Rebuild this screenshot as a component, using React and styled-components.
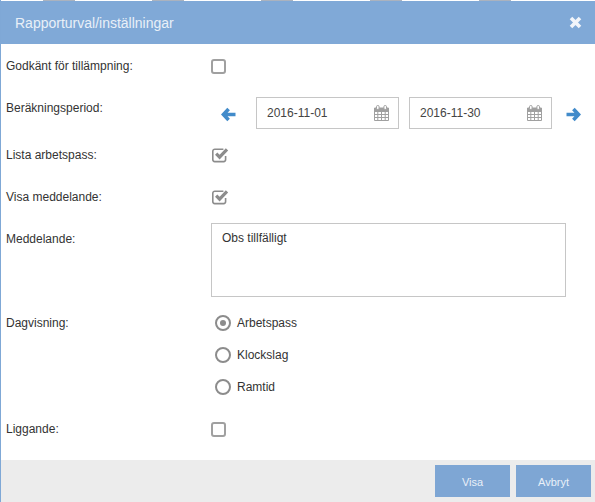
import styled, { createGlobalStyle } from "styled-components";

const GlobalStyle = createGlobalStyle`
  html, body {
    margin: 0;
    padding: 0;
    background: #fff;
  }
`;

const CalendarIcon = () => (
  <svg width="15" height="16" viewBox="0 0 15 16" fill="none">
    <path
      d="M0.5 3h14v12.5h-14zM0.5 6.5h14M0.5 9.5h14M0.5 12.5h14M3.8 6.5v9M7.5 6.5v9M11.2 6.5v9"
      stroke="#a0a0a0"
      strokeWidth="1"
    />
    <path d="M0.5 3h14v3.5h-14z" fill="#a0a0a0" />
    <rect x="2.5" y="0.5" width="2.6" height="4" rx="1.2" fill="#fff" stroke="#a0a0a0" />
    <rect x="9.9" y="0.5" width="2.6" height="4" rx="1.2" fill="#fff" stroke="#a0a0a0" />
  </svg>
);

const CheckedIcon = () => (
  <svg width="18" height="16" viewBox="-1 0 18 16" fill="none">
    <path
      d="M13.6 9v3.6a2 2 0 0 1-2 2H2.8a2 2 0 0 1-2-2V4.2a2 2 0 0 1 2-2h8.6"
      stroke="#8c8c8c"
      strokeWidth="1.6"
    />
    <path d="M4.2 6.6l3.4 3.6L15 2.4" stroke="#8c8c8c" strokeWidth="3.2" />
  </svg>
);

const ArrowIcon = ({ flip }) => (
  <svg
    width="15"
    height="15"
    viewBox="0 0 15 15"
    fill="none"
    style={flip ? { transform: "scaleX(-1)" } : undefined}
  >
    <path d="M7.6 2L2.4 7.5l5.2 5.5M3 7.5h11.5" stroke="#428bca" strokeWidth="3.6" />
  </svg>
);

const CloseIcon = () => (
  <svg width="13" height="13" viewBox="0 0 13 13" fill="none">
    <path d="M2 2l9 9M11 2l-9 9" stroke="#f2f5fa" strokeWidth="3.6" />
  </svg>
);

const App = () => {
  return (
    <>
      <GlobalStyle />
      <Dialog>
        <BackdropStrip>
          <BackdropMark />
          <BackdropMark />
          <BackdropMark />
          <BackdropMark />
          <BackdropMark />
        </BackdropStrip>
        <Header>
          <Title>Rapporturval/inställningar</Title>
          <CloseIcon />
        </Header>
        <Form>
          <Row $height={42}>
            <Label>Godkänt för tillämpning:</Label>
            <Control $offset={3}>
              <Checkbox />
            </Control>
          </Row>
          <Row $height={47}>
            <Label>Beräkningsperiod:</Label>
            <Period>
              <ArrowButton $side="left">
                <ArrowIcon />
              </ArrowButton>
              <DateField>
                2016-11-01
                <CalendarIcon />
              </DateField>
              <DateField>
                2016-11-30
                <CalendarIcon />
              </DateField>
              <ArrowButton $side="right">
                <ArrowIcon flip />
              </ArrowButton>
            </Period>
          </Row>
          <Row $height={42}>
            <Label>Lista arbetspass:</Label>
            <Control $offset={2}>
              <CheckedIcon />
            </Control>
          </Row>
          <Row $height={42}>
            <Label>Visa meddelande:</Label>
            <Control $offset={2}>
              <CheckedIcon />
            </Control>
          </Row>
          <Row $height={84}>
            <Label>Meddelande:</Label>
            <Control $offset={-6}>
              <MessageBox>Obs tillfälligt</MessageBox>
            </Control>
          </Row>
          <Row $height={106}>
            <Label>Dagvisning:</Label>
            <RadioGroup>
              <RadioRow>
                <Radio $checked />
                Arbetspass
              </RadioRow>
              <RadioRow>
                <Radio />
                Klockslag
              </RadioRow>
              <RadioRow>
                <Radio />
                Ramtid
              </RadioRow>
            </RadioGroup>
          </Row>
          <Row $height={41}>
            <Label>Liggande:</Label>
            <Control $offset={3}>
              <Checkbox />
            </Control>
          </Row>
        </Form>
        <Footer>
          <FooterButton>Visa</FooterButton>
          <FooterButton>Avbryt</FooterButton>
        </Footer>
      </Dialog>
    </>
  );
};

export default App;

const Dialog = styled.div`
  display: flex;
  flex-direction: column;
  width: 595px;
  height: 502px;
  box-sizing: border-box;
  border-left: 1px solid #7fa8d6;
  overflow: hidden;
  font-family: "Liberation Sans", Arial, sans-serif;
  font-size: 12px;
  color: #333;
`;

const BackdropStrip = styled.div`
  display: flex;
  gap: 77px;
  flex: 0 0 1px;
  padding-left: 42px;
`;

const BackdropMark = styled.span`
  width: 32px;
  height: 1px;
  background: #aab2be;
`;

const Header = styled.header`
  display: flex;
  align-items: center;
  justify-content: space-between;
  flex: 0 0 43px;
  margin-left: -1px;
  padding: 0 13px 0 15px;
  background: #80a9d7;
  color: #e9f0f8;
`;

const Title = styled.h4`
  margin: 0;
  font-size: 14px;
  font-weight: 400;
`;

const Form = styled.div`
  flex: 1;
  padding-top: 12px;
`;

const Row = styled.div`
  display: flex;
  align-items: flex-start;
  height: ${(p) => p.$height}px;
  padding-left: 5px;
`;

const Label = styled.label`
  flex: 0 0 205px;
  line-height: 20px;
`;

const Control = styled.div`
  display: flex;
  margin-top: ${(p) => p.$offset}px;
`;

const Checkbox = styled.span`
  width: 11px;
  height: 11px;
  border: 2px solid #a0a0a0;
  border-radius: 3px;
`;

const Period = styled.div`
  display: flex;
  align-items: center;
  margin-top: -1px;
`;

const ArrowButton = styled.span`
  display: flex;
  margin-top: 2px;
  margin-left: ${(p) => (p.$side === "left" ? "10px" : "14px")};
  margin-right: ${(p) => (p.$side === "left" ? "20px" : "0")};
`;

const DateField = styled.div`
  display: flex;
  align-items: center;
  justify-content: space-between;
  box-sizing: border-box;
  width: 143px;
  height: 32px;
  margin-right: 10px;
  padding: 0 9px 0 10px;
  border: 1px solid #c6c6c6;
  color: #444;
  &:nth-of-type(2) {
    margin-right: 0;
  }
`;

const MessageBox = styled.div`
  box-sizing: border-box;
  width: 355px;
  height: 74px;
  padding: 7px 10px;
  border: 1px solid #c6c6c6;
  line-height: 14px;
`;

const RadioGroup = styled.div`
  display: flex;
  flex-direction: column;
  gap: 12px;
  padding-left: 4px;
`;

const RadioRow = styled.div`
  display: flex;
  align-items: center;
  gap: 7px;
  line-height: 20px;
`;

const Radio = styled.span`
  position: relative;
  box-sizing: border-box;
  width: 16px;
  height: 16px;
  margin-right: -1px;
  border: 2.5px solid #8c8c8c;
  border-radius: 50%;
  &::after {
    content: "";
    display: ${(p) => (p.$checked ? "block" : "none")};
    position: absolute;
    top: 2.5px;
    left: 2.5px;
    width: 6px;
    height: 6px;
    border-radius: 50%;
    background: #8c8c8c;
  }
`;

const Footer = styled.footer`
  display: flex;
  justify-content: flex-end;
  align-items: center;
  gap: 6px;
  flex: 0 0 42px;
  padding-right: 4px;
  background: #ececec;
`;

const FooterButton = styled.button`
  width: 75px;
  height: 32px;
  padding-top: 2px;
  border: none;
  background: #7ea6d4;
  color: #e9f0f8;
  font-family: inherit;
  font-size: 11px;
`;
